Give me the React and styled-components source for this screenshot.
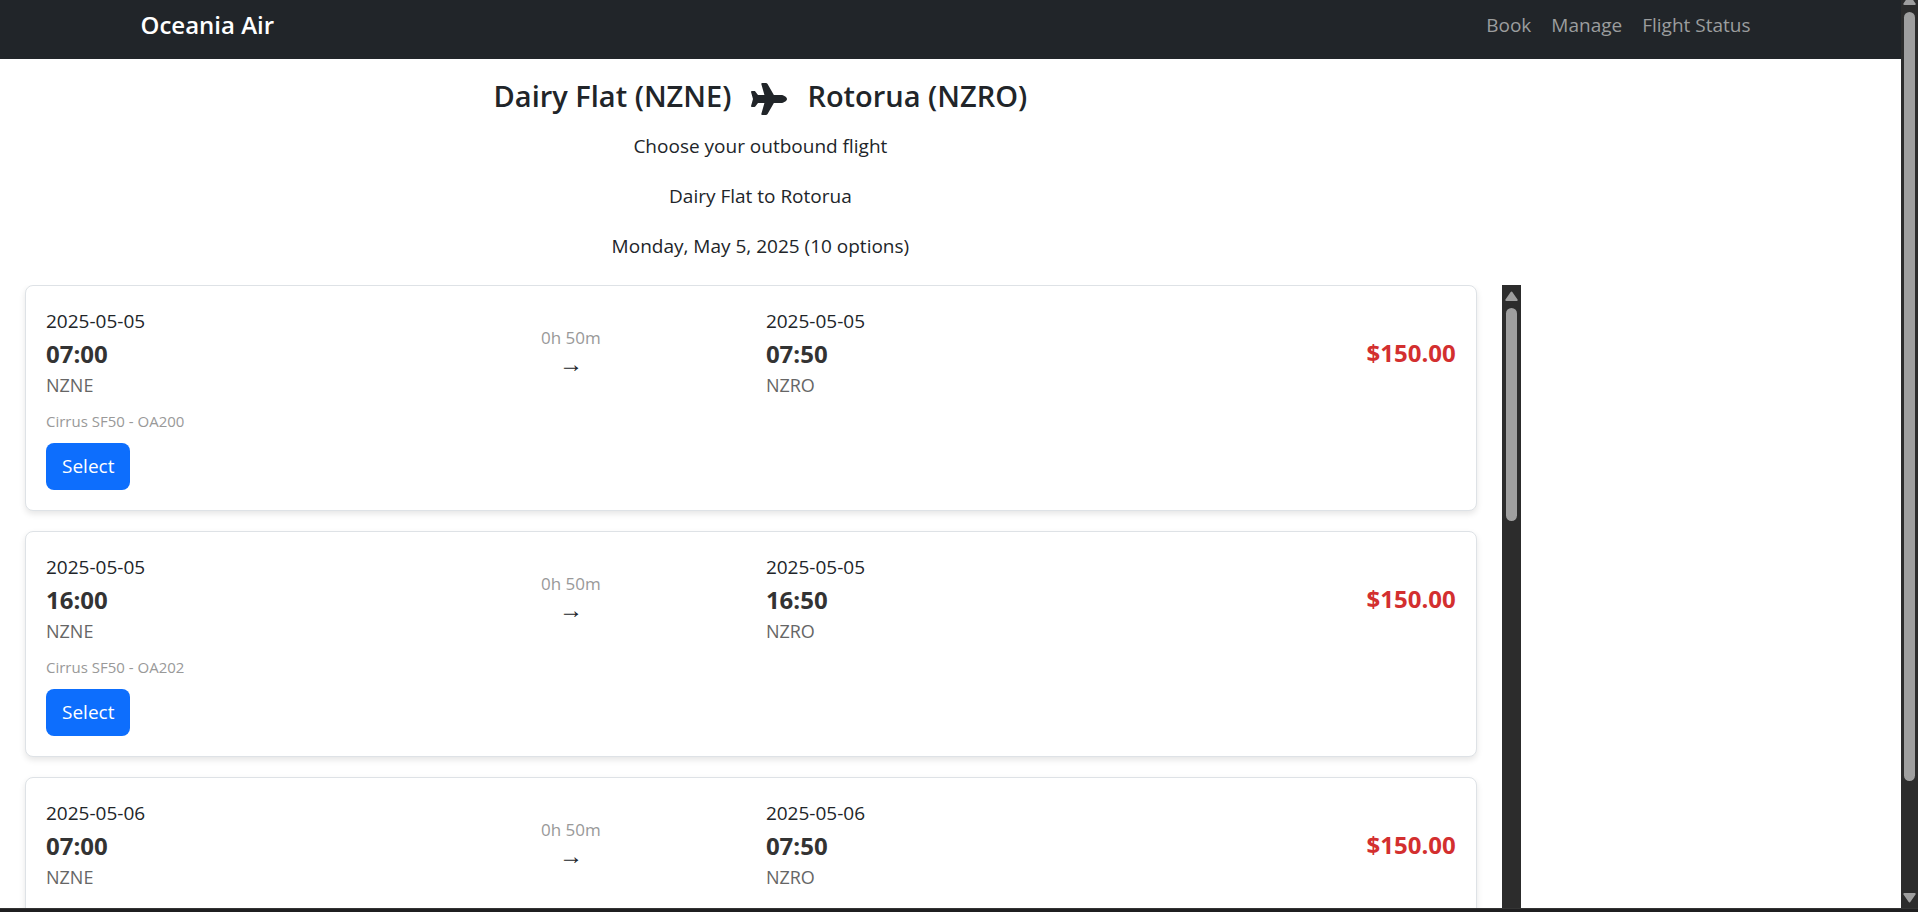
import React from "react";
import styled, { createGlobalStyle } from "styled-components";
import { FaPlane } from "react-icons/fa6";

const GlobalStyle = createGlobalStyle`
  *, *::before, *::after { box-sizing: border-box; }
  body {
    margin: 0;
    background: #fff;
    color: #212529;
    font-family: "Segoe UI", "Open Sans", "Noto Sans", sans-serif;
    font-size: 19px;
    line-height: 30px;
  }
`;

const Shell = styled.div`
  display: flex;
  flex-direction: column;
  height: 100vh;
  overflow: hidden;
`;

const Viewport = styled.div`
  display: flex;
  flex: 1;
  min-height: 0;
`;

const WindowEdge = styled.div`
  height: 4px;
  background: #1f1f20;
  border-top: 1px solid #343434;
`;

const Page = styled.div`
  display: flex;
  flex-direction: column;
  flex: 1;
  min-width: 0;
`;

const Navbar = styled.nav`
  flex: none;
  background: #212529;
  padding: 6px 0 15px;
`;

const NavInner = styled.div`
  display: flex;
  align-items: center;
  justify-content: space-between;
  max-width: 1650px;
  margin: 0 auto;
  padding: 0 15px;
`;

const Brand = styled.a`
  color: #fff;
  font-size: 24px;
  font-weight: 600;
  line-height: 38px;
  text-decoration: none;
`;

const NavLinks = styled.div`
  display: flex;
`;

const NavLink = styled.a`
  padding: 0 10px;
  color: #9b9d9e;
  text-decoration: none;
`;

const Main = styled.main`
  display: flex;
  flex-direction: column;
  flex: 1;
  min-height: 0;
  width: 80%;
`;

const Header = styled.header`
  display: flex;
  flex-direction: column;
  align-items: center;
  padding: 18px 0 24px;
  text-align: center;
`;

const Route = styled.h1`
  display: flex;
  align-items: flex-end;
  gap: 20px;
  margin: 0 0 16px;
  font-size: 29px;
  font-weight: 600;
  line-height: 38px;
`;

const PlaneIcon = styled(FaPlane)`
  width: 36px;
  height: 32px;
`;

const Notes = styled.div`
  display: flex;
  flex-direction: column;
  gap: 20px;
`;

const Note = styled.p`
  margin: 0;
`;

const Results = styled.section`
  display: flex;
  flex: 1;
  min-height: 0;
`;

const FlightList = styled.ul`
  display: flex;
  flex-direction: column;
  flex: 1;
  gap: 20px;
  margin: 0;
  padding: 0 25px;
  list-style: none;
  overflow-y: auto;
  scrollbar-width: none;
`;

const Card = styled.li`
  flex: none;
  padding: 20px;
  border: 1px solid #dee2e6;
  border-radius: 8px;
  background: #fff;
  box-shadow: 0 3px 6px rgba(0, 0, 0, 0.1);
`;

const Legs = styled.div`
  display: grid;
  grid-template-columns: repeat(4, 1fr);
  align-items: center;
  gap: 30px;
`;

const Leg = styled.div`
  display: flex;
  flex-direction: column;
`;

const Time = styled.time`
  color: #333;
  font-size: 24px;
  font-weight: 700;
  line-height: 36px;
`;

const Airport = styled.span`
  color: #666;
  font-size: 18px;
  line-height: 27px;
`;

const Duration = styled.div`
  display: flex;
  flex-direction: column;
  align-items: center;
  padding-bottom: 6px;
`;

const DurationText = styled.span`
  color: #999;
  font-size: 17px;
  line-height: 27px;
`;

const DirectionArrow = styled.span`
  font-size: 24px;
  line-height: 24px;
`;

const Price = styled.strong`
  color: #d32f2f;
  font-size: 24px;
  font-weight: 700;
  line-height: 36px;
  text-align: right;
`;

const Aircraft = styled.p`
  margin: 10px 0;
  color: #999;
  font-size: 15px;
  line-height: 24px;
`;

const SelectButton = styled.button`
  display: block;
  padding: 8px 16px;
  border: 0;
  border-radius: 8px;
  background: #0d6efd;
  color: #fff;
  font: inherit;
  line-height: 31px;
  cursor: pointer;
`;

const Rail = styled.div`
  display: flex;
  flex: none;
  flex-direction: column;
  align-items: center;
  width: ${(p) => p.$width}px;
  margin-top: ${(p) => (p.$tucked ? "-5px" : "0")};
  padding: ${(p) => p.$padding};
  background: #2c2c2c;
`;

const Track = styled.div`
  flex: 1;
  margin: 7px 0;
`;

const Thumb = styled.div`
  width: 11px;
  height: ${(p) => p.$length};
  border-radius: 6px;
  background: #9f9f9f;
`;

const Arrow = styled.svg`
  display: block;
  flex: none;
  width: 13px;
  height: 10px;
  fill: #9f9f9f;
  stroke: #9f9f9f;
  stroke-width: 2;
  stroke-linejoin: round;
`;

const flights = [
  { date: "2025-05-05", departs: "07:00", arrives: "07:50", number: "OA200" },
  { date: "2025-05-05", departs: "16:00", arrives: "16:50", number: "OA202" },
  { date: "2025-05-06", departs: "07:00", arrives: "07:50", number: "OA200" },
];

function ScrollRail({ width, padding, length, tucked, end }) {
  return (
    <Rail $width={width} $padding={padding} $tucked={tucked} aria-hidden="true">
      <Arrow viewBox="0 0 13 10"><path d="M6.5 1.5 L11.7 9 H1.3 Z" /></Arrow>
      <Track><Thumb $length={length} /></Track>
      {end && <Arrow viewBox="0 0 13 10"><path d="M6.5 8.5 L11.7 1 H1.3 Z" /></Arrow>}
    </Rail>
  );
}

function Stop({ date, time, airport }) {
  return (
    <Leg>
      <span>{date}</span>
      <Time>{time}</Time>
      <Airport>{airport}</Airport>
    </Leg>
  );
}

function FlightCard({ flight }) {
  return (
    <Card>
      <Legs>
        <Stop date={flight.date} time={flight.departs} airport="NZNE" />
        <Duration>
          <DurationText>0h 50m</DurationText>
          <DirectionArrow>→</DirectionArrow>
        </Duration>
        <Stop date={flight.date} time={flight.arrives} airport="NZRO" />
        <Price>$150.00</Price>
      </Legs>
      <Aircraft>Cirrus SF50 - {flight.number}</Aircraft>
      <SelectButton type="button">Select</SelectButton>
    </Card>
  );
}

export default function App() {
  return (
    <>
      <GlobalStyle />
      <Shell>
        <Viewport>
          <Page>
            <Navbar>
              <NavInner>
                <Brand href="#home">Oceania Air</Brand>
                <NavLinks>
                  <NavLink href="#book">Book</NavLink>
                  <NavLink href="#manage">Manage</NavLink>
                  <NavLink href="#status">Flight Status</NavLink>
                </NavLinks>
              </NavInner>
            </Navbar>
            <Main>
              <Header>
                <Route>
                  <span>Dairy Flat (NZNE)</span>
                  <PlaneIcon aria-label="to" />
                  <span>Rotorua (NZRO)</span>
                </Route>
                <Notes>
                  <Note>Choose your outbound flight</Note>
                  <Note>Dairy Flat to Rotorua</Note>
                  <Note>Monday, May 5, 2025 (10 options)</Note>
                </Notes>
              </Header>
              <Results>
                <FlightList>
                  {flights.map((flight) => (
                    <FlightCard key={flight.date + flight.number} flight={flight} />
                  ))}
                </FlightList>
                <ScrollRail width={19} padding="6px 0 0" length="36%" />
              </Results>
            </Main>
          </Page>
          <ScrollRail width={17} padding="0 0 5px" length="88%" tucked end />
        </Viewport>
        <WindowEdge />
      </Shell>
    </>
  );
}
